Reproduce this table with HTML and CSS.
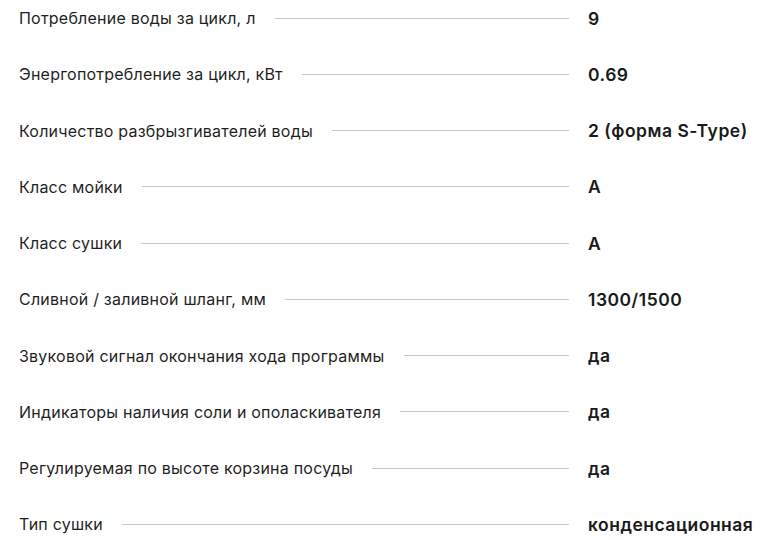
FILE: index.html
```html
<!DOCTYPE html>
<html lang="ru">
<head>
<meta charset="utf-8">
<link rel="stylesheet" href="styles.css">
</head>
<body>
<div class="specs">
  <div class="row"><span class="label">Потребление воды за цикл, л</span><span class="line"></span><span class="value">9</span></div>
  <div class="row"><span class="label">Энергопотребление за цикл, кВт</span><span class="line"></span><span class="value">0.69</span></div>
  <div class="row"><span class="label">Количество разбрызгивателей воды</span><span class="line"></span><span class="value">2 (форма S-Type)</span></div>
  <div class="row"><span class="label">Класс мойки</span><span class="line"></span><span class="value">A</span></div>
  <div class="row"><span class="label">Класс сушки</span><span class="line"></span><span class="value">A</span></div>
  <div class="row"><span class="label">Сливной / заливной шланг, мм</span><span class="line"></span><span class="value">1300/1500</span></div>
  <div class="row"><span class="label">Звуковой сигнал окончания хода программы</span><span class="line"></span><span class="value">да</span></div>
  <div class="row"><span class="label">Индикаторы наличия соли и ополаскивателя</span><span class="line"></span><span class="value">да</span></div>
  <div class="row"><span class="label">Регулируемая по высоте корзина посуды</span><span class="line"></span><span class="value">да</span></div>
  <div class="row"><span class="label">Тип сушки</span><span class="line"></span><span class="value">конденсационная</span></div>
</div>
</body>
</html>
```
FILE: styles.css
```css
html, body {
  margin: 0;
  padding: 0;
  background: #ffffff;
}
body {
  font-family: Inter, "Noto Sans", sans-serif;
  color: #1f1f1f;
}
.specs {
  display: flex;
  flex-direction: column;
  gap: 36.25px;
  padding: 8px 0 0 19px;
}
.row {
  display: flex;
  align-items: center;
  height: 20px;
}
.label {
  font-size: 16px;
  font-weight: 400;
  letter-spacing: 0.22px;
  white-space: nowrap;
}
.line {
  flex: 1;
  height: 1px;
  background: #c8c8c8;
  margin-left: 19px;
}
.value {
  width: 199px;
  box-sizing: border-box;
  padding-left: 19px;
  font-size: 17.5px;
  font-weight: 600;
  letter-spacing: 0.5px;
  white-space: nowrap;
  color: #1a1a1a;
}
```
